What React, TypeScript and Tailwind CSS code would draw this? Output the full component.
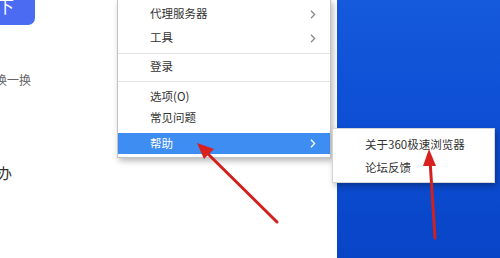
import React from "react";

const Chevron = () => (
  <svg width="6" height="9" viewBox="0 0 6 9" className="block">
    <path d="M1 0.8 L4.6 4.5 L1 8.2" fill="none" stroke="#8a8a8a" strokeWidth="1.3" />
  </svg>
);

const ChevronW = () => (
  <svg width="6" height="9" viewBox="0 0 6 9" className="block">
    <path d="M1 0.8 L4.6 4.5 L1 8.2" fill="none" stroke="#ffffff" strokeWidth="1.3" />
  </svg>
);

export default function App() {
  const font = { fontFamily: '"Noto Sans CJK SC", "Noto Sans", sans-serif' };
  return (
    <div className="relative w-[500px] h-[258px] overflow-hidden bg-white flex" style={font}>
      {/* page */}
      <div className="w-[337px] h-full bg-white flex flex-col">
        <div className="w-[35px] h-[25px] bg-[#4a6bf2] rounded-br-[7px] overflow-hidden flex">
          <span className="text-white text-[17px] leading-none mt-[-3px] ml-[-3px]">下</span>
        </div>
        <div className="mt-[48px] ml-[-5px] text-[12px] leading-[14px] text-[#666]">换一换</div>
        <div className="mt-[77px] ml-[-3px] text-[15px] leading-[18px] text-[#333]">办</div>
      </div>
      {/* desktop */}
      <div className="flex-1 h-full bg-gradient-to-b from-[#1559dc] via-[#0d4ed4] to-[#0844c6]" />

      {/* main menu */}
      <div className="absolute left-[117px] top-[-1px] w-[214px] h-[159px] bg-white border border-[#c4c4c4] shadow-[2px_3px_6px_rgba(0,0,0,0.28)] flex flex-col text-[11.5px] text-[#333]">
        <div className="h-[2px]" />
        <div className="h-[24px] flex items-center pl-[32px] pr-[14px] justify-between">
          <span>代理服务器</span>
          <Chevron />
        </div>
        <div className="h-[24px] flex items-center pl-[32px] pr-[14px] justify-between">
          <span>工具</span>
          <Chevron />
        </div>
        <div className="h-[6px] flex items-center">
          <div className="w-full h-px bg-[#e2e2e2]" />
        </div>
        <div className="h-[22px] flex items-center pl-[32px]">
          <span>登录</span>
        </div>
        <div className="h-[6px] flex items-center">
          <div className="w-full h-px bg-[#e2e2e2]" />
        </div>
        <div className="h-[2px]" />
        <div className="h-[21px] flex items-center pl-[32px]">
          <span>选项(O)</span>
        </div>
        <div className="h-[21px] flex items-center pl-[32px]">
          <span>常见问题</span>
        </div>
        <div className="h-[5px]" />
        <div className="h-[21px] flex items-center pl-[32px] pr-[14px] justify-between bg-[#3d8df2] text-white">
          <span>帮助</span>
          <ChevronW />
        </div>
      </div>

      {/* submenu */}
      <div className="absolute left-[332px] top-[128px] w-[163px] h-[55px] bg-white border border-[#d4d4d4] shadow-[2px_3px_6px_rgba(0,0,0,0.3)] flex flex-col pl-[32px] pt-[4px] text-[11.5px] text-[#333]">
        <div className="h-[23px] flex items-center">关于360极速浏览器</div>
        <div className="h-[23px] flex items-center">论坛反馈</div>
      </div>

      {/* arrows */}
      <svg className="absolute inset-0 pointer-events-none" width="500" height="258" viewBox="0 0 500 258">
        <line x1="277" y1="222" x2="204" y2="150" stroke="#d2201f" strokeWidth="3" strokeLinecap="round" />
        <polygon points="197,143 214,149 204,159" fill="#d8201e" />
        <line x1="435" y1="238" x2="430" y2="160" stroke="#d2201f" strokeWidth="3" strokeLinecap="round" />
        <polygon points="429,149 436,166 423,166" fill="#d8201e" />
      </svg>
    </div>
  );
}
